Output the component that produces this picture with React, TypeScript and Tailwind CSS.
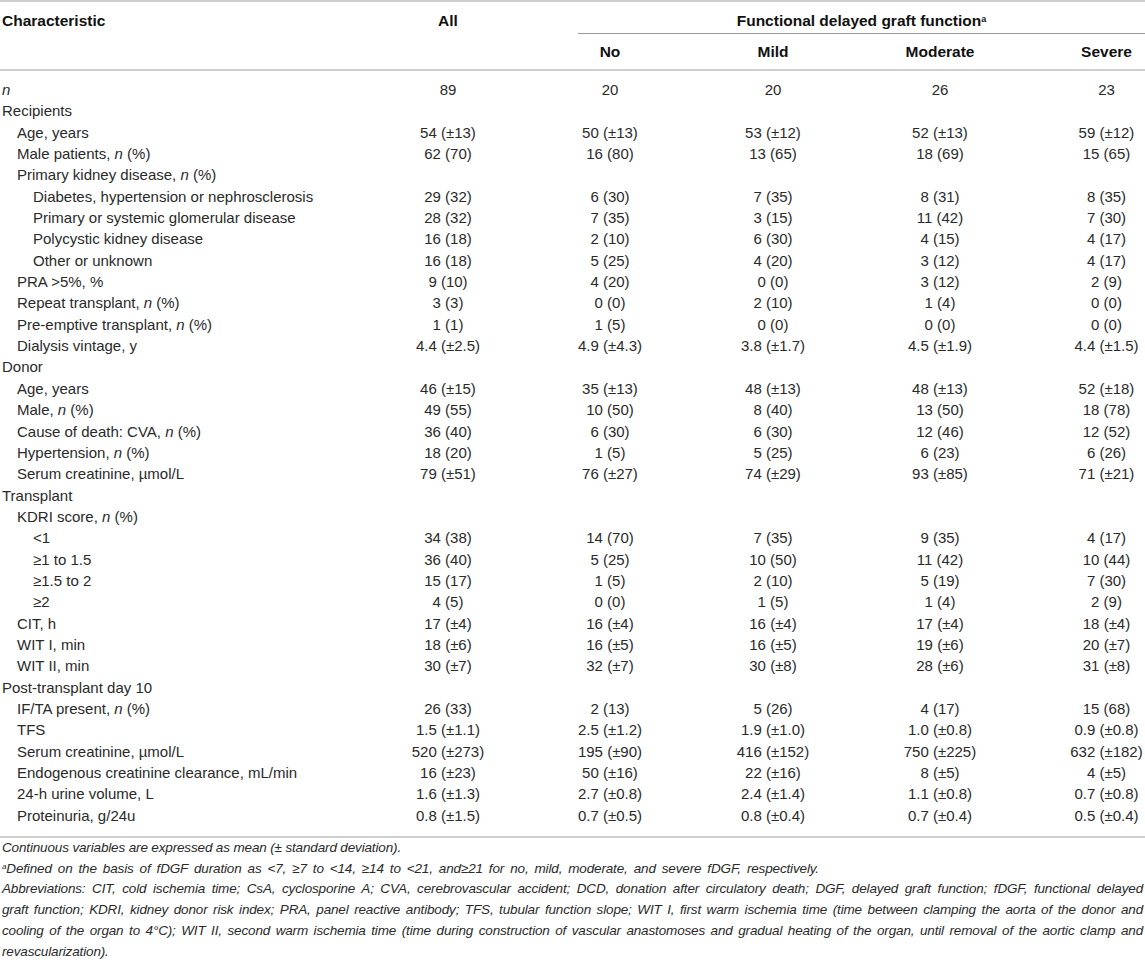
import React from "react";

type Row = { label: React.ReactNode; level: 0 | 1 | 2; vals?: string[] };

const I = ({ children }: { children: React.ReactNode }) => <i>{children}</i>;

const rows: Row[] = [
  { label: <I>n</I>, level: 0, vals: ["89", "20", "20", "26", "23"] },
  { label: "Recipients", level: 0 },
  { label: "Age, years", level: 1, vals: ["54 (±13)", "50 (±13)", "53 (±12)", "52 (±13)", "59 (±12)"] },
  { label: <>Male patients, <I>n</I> (%)</>, level: 1, vals: ["62 (70)", "16 (80)", "13 (65)", "18 (69)", "15 (65)"] },
  { label: <>Primary kidney disease, <I>n</I> (%)</>, level: 1 },
  { label: "Diabetes, hypertension or nephrosclerosis", level: 2, vals: ["29 (32)", "6 (30)", "7 (35)", "8 (31)", "8 (35)"] },
  { label: "Primary or systemic glomerular disease", level: 2, vals: ["28 (32)", "7 (35)", "3 (15)", "11 (42)", "7 (30)"] },
  { label: "Polycystic kidney disease", level: 2, vals: ["16 (18)", "2 (10)", "6 (30)", "4 (15)", "4 (17)"] },
  { label: "Other or unknown", level: 2, vals: ["16 (18)", "5 (25)", "4 (20)", "3 (12)", "4 (17)"] },
  { label: "PRA >5%, %", level: 1, vals: ["9 (10)", "4 (20)", "0 (0)", "3 (12)", "2 (9)"] },
  { label: <>Repeat transplant, <I>n</I> (%)</>, level: 1, vals: ["3 (3)", "0 (0)", "2 (10)", "1 (4)", "0 (0)"] },
  { label: <>Pre-emptive transplant, <I>n</I> (%)</>, level: 1, vals: ["1 (1)", "1 (5)", "0 (0)", "0 (0)", "0 (0)"] },
  { label: "Dialysis vintage, y", level: 1, vals: ["4.4 (±2.5)", "4.9 (±4.3)", "3.8 (±1.7)", "4.5 (±1.9)", "4.4 (±1.5)"] },
  { label: "Donor", level: 0 },
  { label: "Age, years", level: 1, vals: ["46 (±15)", "35 (±13)", "48 (±13)", "48 (±13)", "52 (±18)"] },
  { label: <>Male, <I>n</I> (%)</>, level: 1, vals: ["49 (55)", "10 (50)", "8 (40)", "13 (50)", "18 (78)"] },
  { label: <>Cause of death: CVA, <I>n</I> (%)</>, level: 1, vals: ["36 (40)", "6 (30)", "6 (30)", "12 (46)", "12 (52)"] },
  { label: <>Hypertension, <I>n</I> (%)</>, level: 1, vals: ["18 (20)", "1 (5)", "5 (25)", "6 (23)", "6 (26)"] },
  { label: "Serum creatinine, µmol/L", level: 1, vals: ["79 (±51)", "76 (±27)", "74 (±29)", "93 (±85)", "71 (±21)"] },
  { label: "Transplant", level: 0 },
  { label: <>KDRI score, <I>n</I> (%)</>, level: 1 },
  { label: "<1", level: 2, vals: ["34 (38)", "14 (70)", "7 (35)", "9 (35)", "4 (17)"] },
  { label: "≥1 to 1.5", level: 2, vals: ["36 (40)", "5 (25)", "10 (50)", "11 (42)", "10 (44)"] },
  { label: "≥1.5 to 2", level: 2, vals: ["15 (17)", "1 (5)", "2 (10)", "5 (19)", "7 (30)"] },
  { label: "≥2", level: 2, vals: ["4 (5)", "0 (0)", "1 (5)", "1 (4)", "2 (9)"] },
  { label: "CIT, h", level: 1, vals: ["17 (±4)", "16 (±4)", "16 (±4)", "17 (±4)", "18 (±4)"] },
  { label: "WIT I, min", level: 1, vals: ["18 (±6)", "16 (±5)", "16 (±5)", "19 (±6)", "20 (±7)"] },
  { label: "WIT II, min", level: 1, vals: ["30 (±7)", "32 (±7)", "30 (±8)", "28 (±6)", "31 (±8)"] },
  { label: "Post-transplant day 10", level: 0 },
  { label: <>IF/TA present, <I>n</I> (%)</>, level: 1, vals: ["26 (33)", "2 (13)", "5 (26)", "4 (17)", "15 (68)"] },
  { label: "TFS", level: 1, vals: ["1.5 (±1.1)", "2.5 (±1.2)", "1.9 (±1.0)", "1.0 (±0.8)", "0.9 (±0.8)"] },
  { label: "Serum creatinine, µmol/L", level: 1, vals: ["520 (±273)", "195 (±90)", "416 (±152)", "750 (±225)", "632 (±182)"] },
  { label: "Endogenous creatinine clearance, mL/min", level: 1, vals: ["16 (±23)", "50 (±16)", "22 (±16)", "8 (±5)", "4 (±5)"] },
  { label: "24-h urine volume, L", level: 1, vals: ["1.6 (±1.3)", "2.7 (±0.8)", "2.4 (±1.4)", "1.1 (±0.8)", "0.7 (±0.8)"] },
  { label: "Proteinuria, g/24u", level: 1, vals: ["0.8 (±1.5)", "0.7 (±0.5)", "0.8 (±0.4)", "0.7 (±0.4)", "0.5 (±0.4)"] },
];

const grid = "grid grid-cols-[366px_164px_160px_166px_168px_1fr]";
const indent = ["pl-[2px]", "pl-[17px]", "pl-[33px]"];

export default function App() {
  return (
    <div
      className="w-[1145px] bg-white text-[#2a2a2a]"
      style={{ fontFamily: '"Liberation Sans", Arial, sans-serif' }}
    >
      {/* header */}
      <div className="border-t-2 border-b-2 border-[#cfcfcf] text-[15.5px] font-bold leading-[20px] text-[#111]">
        <div className={grid}>
          <div className="pl-[2px] pt-[9px]">Characteristic</div>
          <div className="pt-[9px] text-center">All</div>
          <div className="col-span-4">
            <div className="ml-[48px] border-b border-[#9a9a9a] pt-[9px] pb-[2px] text-center">
              Functional delayed graft function
              <sup className="text-[9px] font-bold">a</sup>
            </div>
          </div>
        </div>
        <div className={grid + " pt-[8px] pb-[7px]"}>
          <div />
          <div />
          <div className="text-center">No</div>
          <div className="text-center">Mild</div>
          <div className="text-center">Moderate</div>
          <div className="pl-[44px] text-center">Severe</div>
        </div>
      </div>

      {/* body */}
      <div className="border-b-2 border-[#cfcfcf] pt-[8px] pb-[10px] text-[15px] leading-[21.35px]">
        {rows.map((r, i) => (
          <div key={i} className={grid}>
            <div className={indent[r.level] + " whitespace-nowrap"}>{r.label}</div>
            {r.vals ? (
              <>
                <div className="text-center whitespace-nowrap">{r.vals[0]}</div>
                <div className="text-center whitespace-nowrap">{r.vals[1]}</div>
                <div className="text-center whitespace-nowrap">{r.vals[2]}</div>
                <div className="text-center whitespace-nowrap">{r.vals[3]}</div>
                <div className="pl-[44px] text-center whitespace-nowrap">{r.vals[4]}</div>
              </>
            ) : null}
          </div>
        ))}
      </div>

      {/* footnotes */}
      <div className="text-[13.5px] italic leading-[20.7px] tracking-[-0.15px] text-[#2a2a2a]">
        <div className="pl-[2px]">Continuous variables are expressed as mean (± standard deviation).</div>
        <div className="pl-[2px] [word-spacing:2.4px]">
          <sup className="text-[8px]">a</sup>Defined on the basis of fDGF duration as &lt;7, ≥7 to &lt;14, ≥14 to &lt;21, and≥21 for no, mild, moderate, and severe fDGF, respectively.
        </div>
        <div className="pl-[2px] pr-[2px] text-justify [text-align-last:justify] whitespace-nowrap">
          Abbreviations: CIT, cold ischemia time; CsA, cyclosporine A; CVA, cerebrovascular accident; DCD, donation after circulatory death; DGF, delayed graft function; fDGF, functional delayed
        </div>
        <div className="pl-[2px] pr-[2px] text-justify [text-align-last:justify] whitespace-nowrap">
          graft function; KDRI, kidney donor risk index; PRA, panel reactive antibody; TFS, tubular function slope; WIT I, first warm ischemia time (time between clamping the aorta of the donor and
        </div>
        <div className="pl-[2px] pr-[2px] text-justify [text-align-last:justify] whitespace-nowrap">
          cooling of the organ to 4°C); WIT II, second warm ischemia time (time during construction of vascular anastomoses and gradual heating of the organ, until removal of the aortic clamp and
        </div>
        <div className="pl-[2px]">revascularization).</div>
      </div>
    </div>
  );
}
